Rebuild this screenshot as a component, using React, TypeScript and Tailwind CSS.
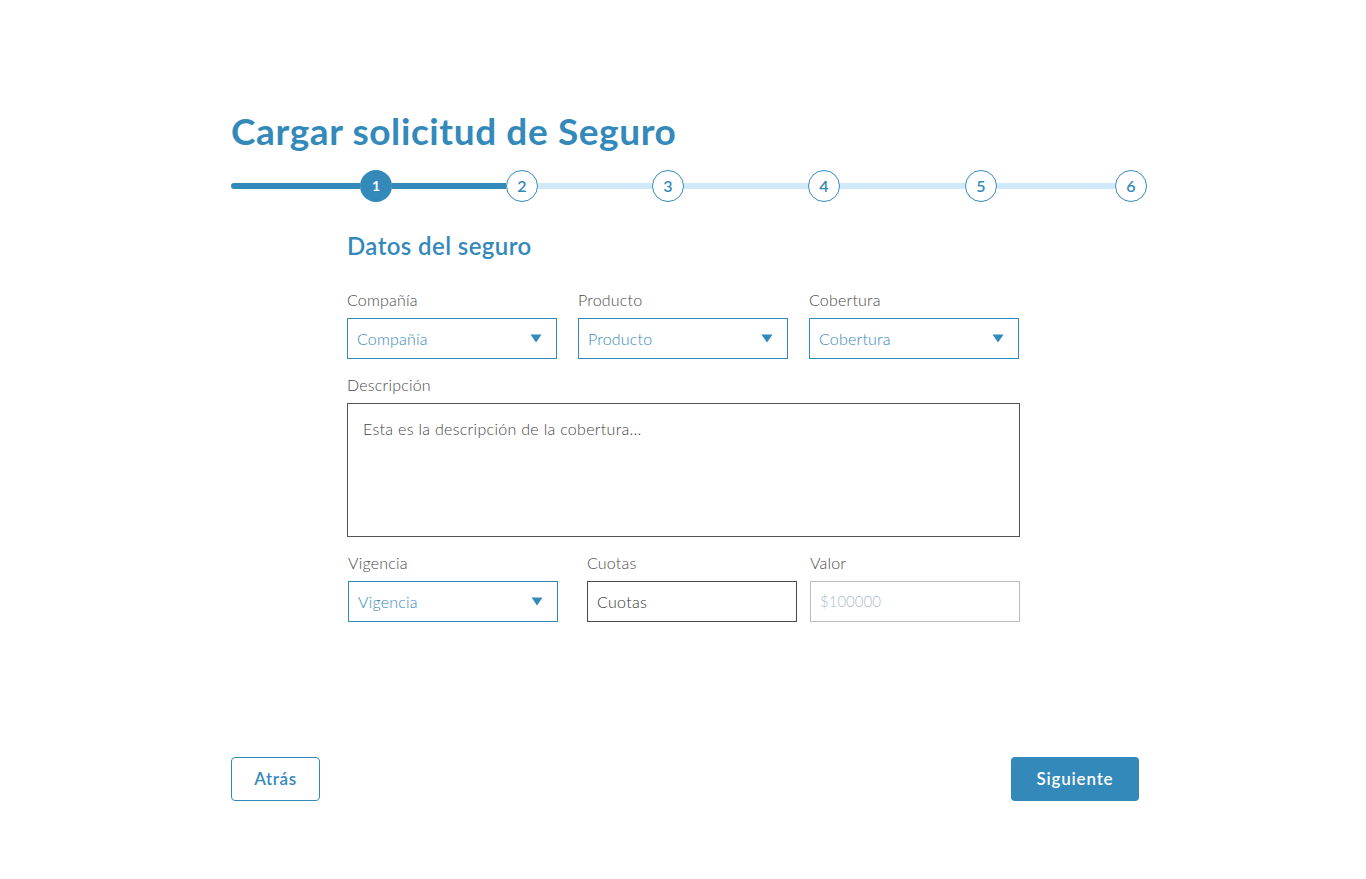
import { ReactNode } from "react";

const FONT = "font-['Lato','Open_Sans',sans-serif]";

function Caret() {
  return (
    <svg width="12" height="9" viewBox="0 0 12 9" className="shrink-0">
      <path d="M0.5 0.5 H11.5 L6 8.5 Z" fill="#3489bb" />
    </svg>
  );
}

function Field({ label, children, className = "" }: { label: string; children: ReactNode; className?: string }) {
  return (
    <div className={`flex w-[210px] flex-col ${className}`}>
      <span className="h-5 text-[16px] leading-5 font-light tracking-[0.2px] text-[#4a4a4a]">{label}</span>
      <div className="mt-2">{children}</div>
    </div>
  );
}

function SelectBox({ value }: { value: string }) {
  return (
    <div className="flex h-[41px] w-[210px] items-center justify-between border border-[#3489bb] pr-[14px] pl-[9px]">
      <span className="text-[16px] font-light tracking-[0.2px] text-[#3489bb]">{value}</span>
      <Caret />
    </div>
  );
}

function Step({ n, active = false }: { n: number; active?: boolean }) {
  if (active) {
    return (
      <div className="flex h-8 w-8 shrink-0 items-center justify-center rounded-full bg-[#3489bb] text-sm font-bold text-white">
        {n}
      </div>
    );
  }
  return (
    <div className="flex h-8 w-8 shrink-0 items-center justify-center rounded-full border border-[#3489bb] bg-white text-base font-semibold text-[#3489bb]">
      {n}
    </div>
  );
}

export default function App() {
  return (
    <div className={`min-h-screen w-full bg-white pt-[109px] pl-[231px] ${FONT}`}>
      <h1 className="h-11 text-[37px] leading-[44px] font-bold tracking-[0.6px] text-[#3489bb]">
        Cargar solicitud de Seguro
      </h1>

      {/* progress stepper */}
      <div className="mt-[17px] flex w-[916px] items-center">
        <div className="h-[6px] w-[129px] rounded-l-full bg-[#3489bb]" />
        <Step n={1} active />
        <div className="h-[6px] w-[114px] bg-[#3489bb]" />
        <Step n={2} />
        <div className="h-[6px] w-[114px] bg-[#cfe9f9]" />
        <Step n={3} />
        <div className="h-[6px] w-[124px] bg-[#cfe9f9]" />
        <Step n={4} />
        <div className="h-[6px] w-[125px] bg-[#cfe9f9]" />
        <Step n={5} />
        <div className="h-[6px] w-[118px] bg-[#cfe9f9]" />
        <Step n={6} />
      </div>

      <div className="ml-[116px] w-[674px]">
        <h2 className="mt-[29px] h-[30px] text-[24px] leading-[30px] font-semibold tracking-[0.4px] text-[#3489bb]">
          Datos del seguro
        </h2>

        <div className="mt-[29px] flex gap-[21px]">
          <Field label="Compañía">
            <SelectBox value="Compañía" />
          </Field>
          <Field label="Producto">
            <SelectBox value="Producto" />
          </Field>
          <Field label="Cobertura">
            <SelectBox value="Cobertura" />
          </Field>
        </div>

        <div className="mt-4 flex flex-col">
          <span className="h-5 text-[16px] leading-5 font-light tracking-[0.2px] text-[#4a4a4a]">Descripción</span>
          <div className="mt-2 h-[134px] w-[673px] border border-[#555555] px-[15px] pt-[13px] text-[16px] font-light tracking-[0.3px] text-[#444444]">
            Esta es la descripción de la cobertura...
          </div>
        </div>

        <div className="mt-4 flex">
          <Field label="Vigencia" className="ml-px">
            <SelectBox value="Vigencia" />
          </Field>
          <Field label="Cuotas" className="ml-[29px]">
            <div className="flex h-[41px] w-[210px] items-center border border-[#4a4a4a] px-[9px] text-[16px] font-light tracking-[0.3px] text-[#333333]">
              Cuotas
            </div>
          </Field>
          <Field label="Valor" className="ml-[13px]">
            <div className="flex h-[41px] w-[210px] items-center border border-[#bdbdbd] px-[9px] text-[15px] font-light text-[#a9bdd0]">
              $100000
            </div>
          </Field>
        </div>
      </div>

      <div className="mt-[135px] flex w-[908px] items-center justify-between pb-10">
        <button
          type="button"
          className="h-11 w-[89px] rounded border border-[#3489bb] bg-white text-[17px] font-semibold tracking-[0.6px] text-[#3489bb]"
        >
          Atrás
        </button>
        <button
          type="button"
          className="h-11 w-[128px] rounded bg-[#3489bb] text-[17px] font-semibold tracking-[0.8px] text-white"
        >
          Siguiente
        </button>
      </div>
    </div>
  );
}
